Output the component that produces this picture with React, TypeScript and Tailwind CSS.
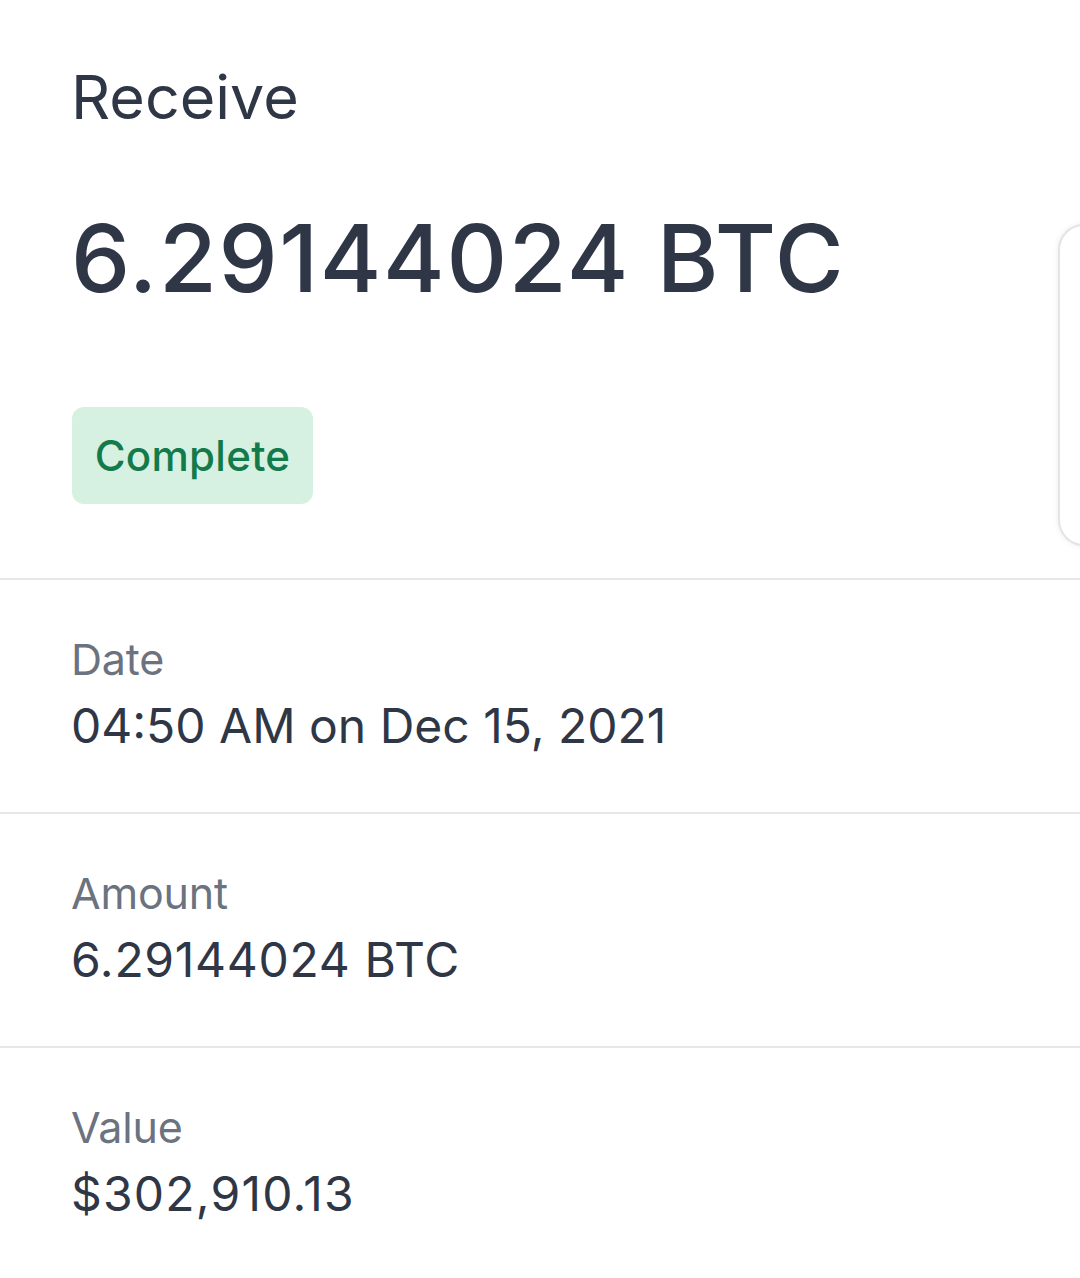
import React from "react";

const Row = ({ label, value, track }: { label: string; value: string; track: string }) => (
  <div className="h-[234px] border-t-2 border-[#e6e7ea] pl-[71px] pt-[53px] flex flex-col">
    <div className="text-[43px] leading-[52px] text-[#6b7280] tracking-[-0.2px]">{label}</div>
    <div className={"mt-[13px] text-[48px] leading-[56px] text-[#2f3747] " + track}>{value}</div>
  </div>
);

export default function App() {
  return (
    <div className="relative w-[1080px] h-[1278px] bg-white overflow-hidden font-['Inter',sans-serif]">
      <div className="absolute left-[1058px] top-[224px] w-[60px] h-[322px] rounded-[26px] border-2 border-[#e3e4e6] shadow-[0_0_6px_rgba(0,0,0,0.08)] bg-white" />
      <div className="h-[578px] pl-[71px] pt-[61px] flex flex-col items-start">
        <div className="text-[61px] leading-[72px] text-[#2f3747] tracking-[0px]">Receive</div>
        <div className="mt-[70px] text-[94px] leading-[110px] font-medium text-[#2f3747] tracking-[1.6px]">6.29144024 BTC</div>
        <div className="mt-[94px] ml-[1px] w-[241px] h-[97px] rounded-[12px] bg-[#d6f1e1] flex items-center justify-center">
          <span className="text-[42px] leading-[48px] font-medium text-[#137a4c] tracking-[0.3px]">Complete</span>
        </div>
      </div>
      <Row label="Date" value="04:50 AM on Dec 15, 2021" track="tracking-[0px]" />
      <Row label="Amount" value="6.29144024 BTC" track="tracking-[0.7px]" />
      <Row label="Value" value="$302,910.13" track="tracking-[1.2px]" />
    </div>
  );
}
